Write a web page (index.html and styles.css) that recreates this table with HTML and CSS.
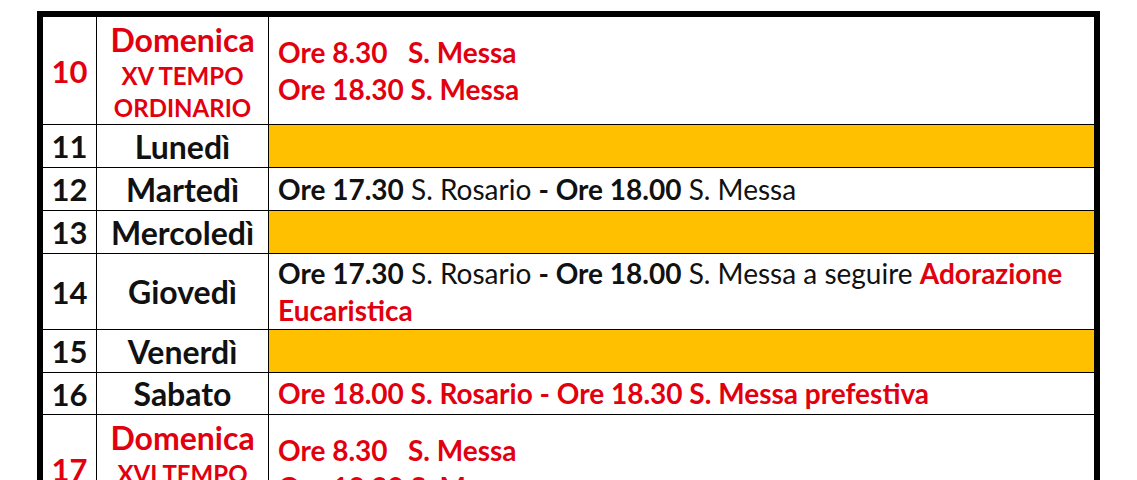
FILE: index.html
```html
<!DOCTYPE html>
<html lang="it">
<head>
<meta charset="utf-8">
<title>Calendario</title>
<link rel="stylesheet" href="styles.css">
</head>
<body>
<div class="page">
<table class="cal">
  <colgroup><col class="c-num"><col class="c-day"><col class="c-info"></colgroup>
  <tr class="r-sun">
    <td class="num red">10</td>
    <td class="day red sun"><div class="sun-name">Domenica</div><div class="sun-sub">XV TEMPO</div><div class="sun-sub">ORDINARIO</div></td>
    <td class="info red b"><div class="ln">Ore 8.30&nbsp;&nbsp; S. Messa</div><div class="ln">Ore 18.30 S. Messa</div></td>
  </tr>
  <tr class="r-std">
    <td class="num">11</td><td class="day">Lunedì</td><td class="info fill"></td>
  </tr>
  <tr class="r-std">
    <td class="num">12</td><td class="day">Martedì</td>
    <td class="info"><b>Ore 17.30</b> S. Rosario <b>- Ore 18.00</b> S. Messa</td>
  </tr>
  <tr class="r-std">
    <td class="num">13</td><td class="day">Mercoledì</td><td class="info fill"></td>
  </tr>
  <tr class="r-tall">
    <td class="num">14</td><td class="day">Giovedì</td>
    <td class="info"><div class="ln"><b>Ore 17.30</b> S. Rosario <b>- Ore 18.00</b> S. Messa a seguire <b class="red">Adorazione</b></div><div class="ln"><b class="red">Eucaristica</b></div></td>
  </tr>
  <tr class="r-std">
    <td class="num">15</td><td class="day">Venerdì</td><td class="info fill"></td>
  </tr>
  <tr class="r-sat">
    <td class="num">16</td><td class="day">Sabato</td>
    <td class="info red b">Ore 18.00 S. Rosario - Ore 18.30 S. Messa prefestiva</td>
  </tr>
  <tr class="r-sun">
    <td class="num red">17</td>
    <td class="day red sun"><div class="sun-name">Domenica</div><div class="sun-sub">XVI TEMPO</div><div class="sun-sub">ORDINARIO</div></td>
    <td class="info red b"><div class="ln">Ore 8.30&nbsp;&nbsp; S. Messa</div><div class="ln">Ore 18.30 S. Messa</div></td>
  </tr>
</table>
</div>
</body>
</html>
```
FILE: styles.css
```css
html, body { margin: 0; padding: 0; background: #fff; overflow: hidden; }
.page { padding: 11px 0 0 37px; }
.cal {
  border-collapse: separate;
  border-spacing: 0;
  border: 6px solid #000;
  box-sizing: border-box;
  width: 1063px;
  table-layout: fixed;
  font-family: Lato, "Open Sans", sans-serif;
  color: #111;
}
.c-num { width: 54px; }
.c-day { width: 172px; }
.cal td {
  padding: 0;
  border-right: 1px solid #000;
  border-bottom: 1px solid #000;
  vertical-align: middle;
  overflow: hidden;
}
.cal td.info { border-right: 0; padding-left: 9px; font-size: 28px; line-height: 37px; }
.num { text-align: center; font-weight: 700; font-size: 31px; }
.day { text-align: center; font-weight: 700; font-size: 32px; }
.cal td.sun { padding-top: 3px; }
.r-sun { height: 108px; }
.r-std { height: 43px; }
.r-tall { height: 76px; }
.r-sat { height: 42px; }
.red { color: #e2000f; }
.b { font-weight: 700; }
.fill { background: #ffc000; }
.day .sun-name { font-size: 32px; line-height: 40px; }
.day .sun-sub { font-size: 24px; line-height: 32px; }
.ln { white-space: nowrap; }
```
